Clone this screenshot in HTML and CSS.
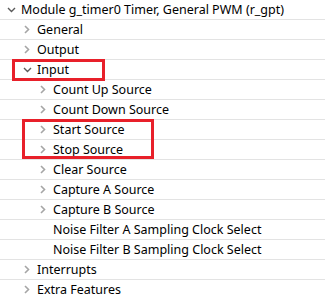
FILE: index.html
```html
<!DOCTYPE html>
<html lang="en">
<head>
  <meta charset="UTF-8">
  <title>Properties</title>
  <link rel="stylesheet" href="styles.css">
</head>
<body>
  <div class="tree">
    <div class="row lvl0"><span class="tw open"><svg width="9" height="6" viewBox="0 0 9 6"><path d="M1 1 L4.5 4.5 L8 1" /></svg></span><span class="label">Module g_timer0 Timer, General PWM (r_gpt)</span></div>
    <div class="row lvl1"><span class="tw"><svg width="6" height="9" viewBox="0 0 6 9"><path d="M1 1 L4.5 4.5 L1 8" /></svg></span><span class="label">General</span></div>
    <div class="row lvl1"><span class="tw"><svg width="6" height="9" viewBox="0 0 6 9"><path d="M1 1 L4.5 4.5 L1 8" /></svg></span><span class="label">Output</span></div>
    <div class="row lvl1"><span class="tw open"><svg width="9" height="6" viewBox="0 0 9 6"><path d="M1 1 L4.5 4.5 L8 1" /></svg></span><span class="label">Input</span></div>
    <div class="row lvl2"><span class="tw"><svg width="6" height="9" viewBox="0 0 6 9"><path d="M1 1 L4.5 4.5 L1 8" /></svg></span><span class="label">Count Up Source</span></div>
    <div class="row lvl2"><span class="tw"><svg width="6" height="9" viewBox="0 0 6 9"><path d="M1 1 L4.5 4.5 L1 8" /></svg></span><span class="label">Count Down Source</span></div>
    <div class="row lvl2"><span class="tw"><svg width="6" height="9" viewBox="0 0 6 9"><path d="M1 1 L4.5 4.5 L1 8" /></svg></span><span class="label">Start Source</span></div>
    <div class="row lvl2"><span class="tw"><svg width="6" height="9" viewBox="0 0 6 9"><path d="M1 1 L4.5 4.5 L1 8" /></svg></span><span class="label">Stop Source</span></div>
    <div class="row lvl2"><span class="tw"><svg width="6" height="9" viewBox="0 0 6 9"><path d="M1 1 L4.5 4.5 L1 8" /></svg></span><span class="label">Clear Source</span></div>
    <div class="row lvl2"><span class="tw"><svg width="6" height="9" viewBox="0 0 6 9"><path d="M1 1 L4.5 4.5 L1 8" /></svg></span><span class="label">Capture A Source</span></div>
    <div class="row lvl2"><span class="tw"><svg width="6" height="9" viewBox="0 0 6 9"><path d="M1 1 L4.5 4.5 L1 8" /></svg></span><span class="label">Capture B Source</span></div>
    <div class="row lvl2"><span class="tw"></span><span class="label">Noise Filter A Sampling Clock Select</span></div>
    <div class="row lvl2"><span class="tw"></span><span class="label">Noise Filter B Sampling Clock Select</span></div>
    <div class="row lvl1"><span class="tw"><svg width="6" height="9" viewBox="0 0 6 9"><path d="M1 1 L4.5 4.5 L1 8" /></svg></span><span class="label">Interrupts</span></div>
    <div class="row lvl1"><span class="tw"><svg width="6" height="9" viewBox="0 0 6 9"><path d="M1 1 L4.5 4.5 L1 8" /></svg></span><span class="label">Extra Features</span></div>

    <!-- red annotation boxes drawn over the tree -->
    <div class="mark mark-input"></div>
    <div class="mark mark-startstop"></div>
  </div>
</body>
</html>
```

FILE: styles.css
```css
* {
  box-sizing: border-box;
  margin: 0;
  padding: 0;
}

body {
  background: #fff;
  font-family: 'Noto Sans', sans-serif;
  font-size: 12.5px;
  color: #000;
  overflow: hidden;
}

.tree {
  position: relative;
  width: 325px;
}

.row {
  display: flex;
  align-items: center;
  height: 20px;
  border-bottom: 1px solid #e3e3e3;
  white-space: nowrap;
}

.lvl0 { padding-left: 3px; }
.lvl1 { padding-left: 19px; }
.lvl2 { padding-left: 35px; }

.tw {
  width: 16px;
  height: 19px;
  display: flex;
  align-items: center;
  justify-content: center;
  flex-shrink: 0;
  margin-right: 2px;
}

.tw svg path {
  fill: none;
  stroke: #a6a6a6;
  stroke-width: 1.6;
}

.tw.open svg path {
  stroke: #5a5a5a;
  stroke-width: 1.4;
}

.label {
  line-height: 19px;
}

.mark {
  position: absolute;
  border: 3px solid #e8202a;
}

.mark-input {
  left: 12px;
  top: 59px;
  width: 93px;
  height: 22px;
}

.mark-startstop {
  left: 22px;
  top: 119px;
  width: 132px;
  height: 40px;
}
```
